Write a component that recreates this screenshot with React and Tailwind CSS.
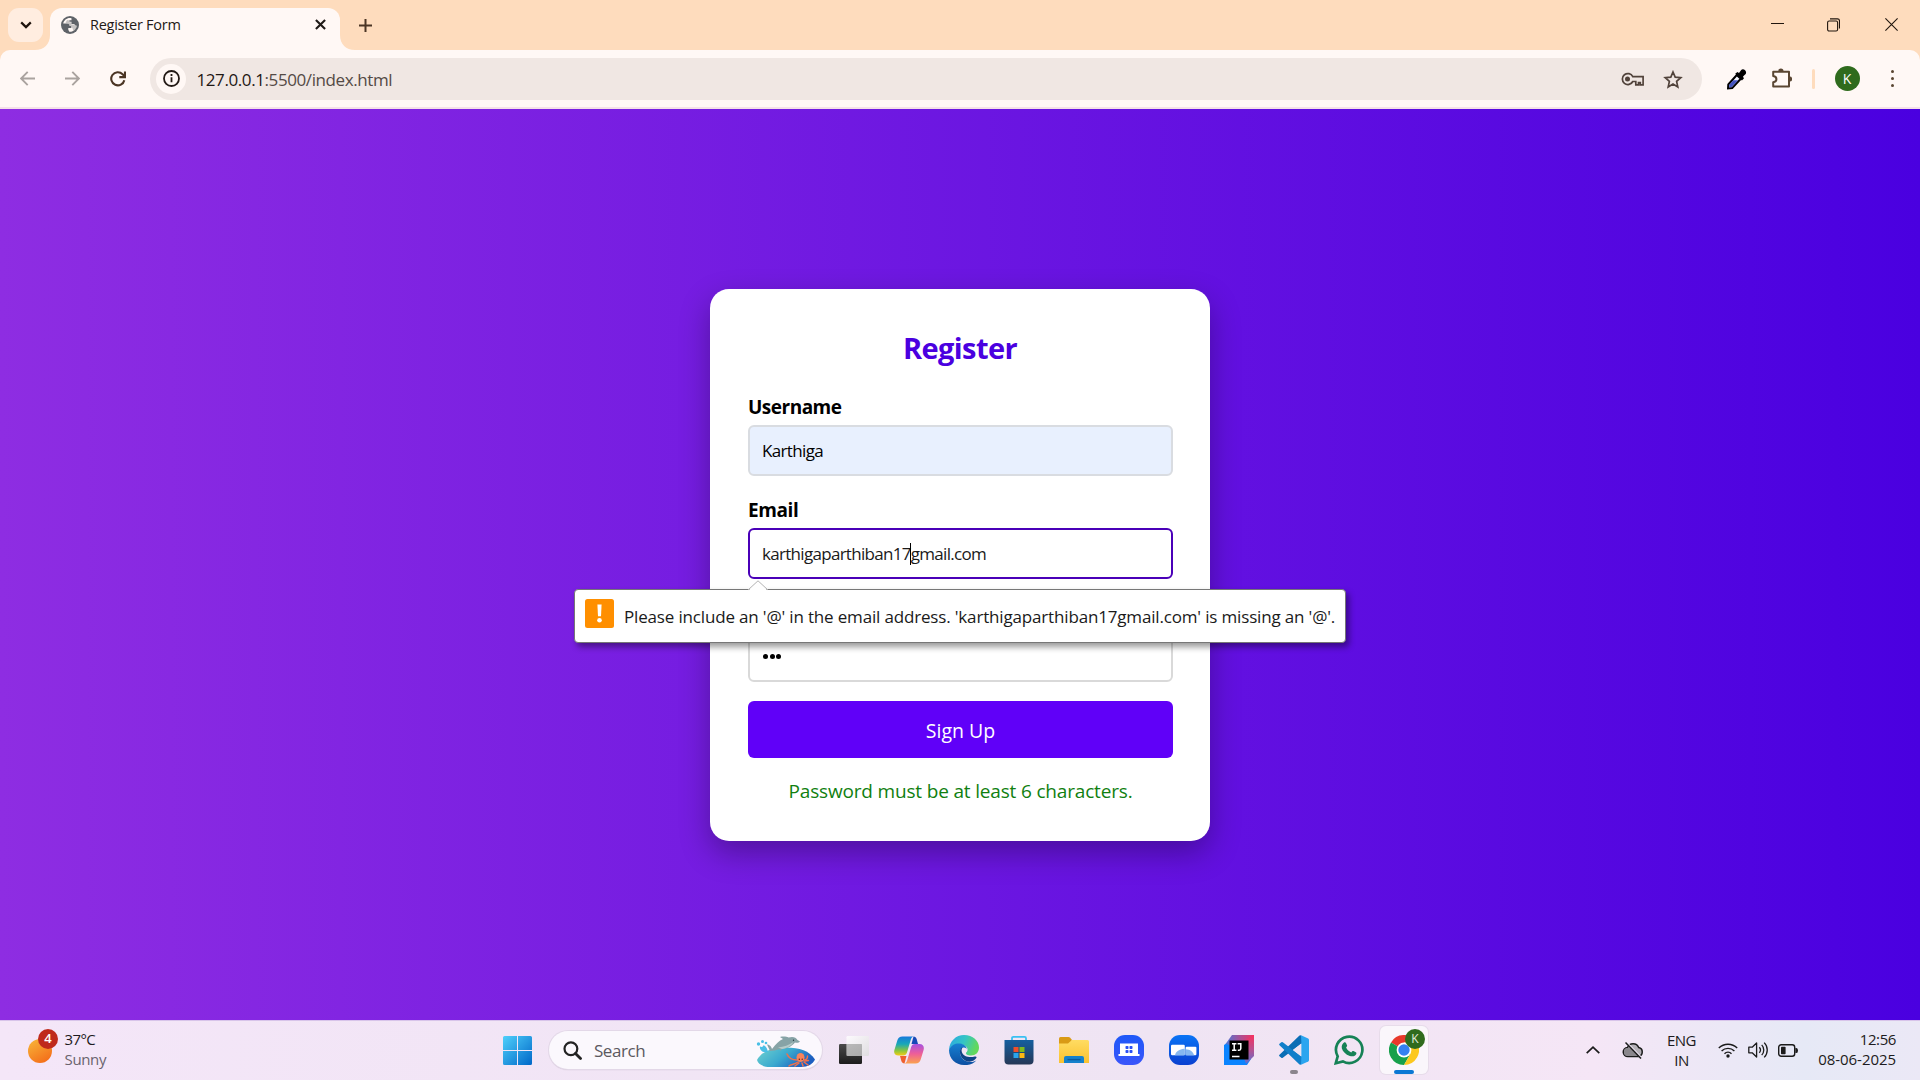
import React from "react";

/* ---------- Browser chrome ---------- */

function TabStrip() {
  return (
    <div className="flex h-[50px] items-stretch bg-[#fedcbd]">
      <button className="mt-2 ml-2 flex h-[34px] w-[35px] items-center justify-center rounded-[11px] bg-[#ffede0]">
        <svg className="h-[8px] w-[12px]" viewBox="0 0 12 8" fill="none" stroke="#1f140d" strokeWidth="2.2">
          <path d="M1.2 1.4 6 6.1l4.8-4.7" />
        </svg>
      </button>
      <svg className="-ml-[8px] mt-auto h-[15px] w-[15px]" viewBox="0 0 15 15">
        <path d="M15 0v15H0C9 15 15 9 15 0z" fill="#fff8f5" />
      </svg>
      <div className="mt-[7.5px] flex max-w-[290px] flex-1 items-center rounded-t-[12px] bg-[#fff8f5] pr-[14px] pb-[8px] pl-[11px]">
        <svg className="h-[18px] w-[18px]" viewBox="0 0 18 18">
          <circle cx="9" cy="9" r="9" fill="#5f6368" />
          <path
            d="M10.500 2.200C6.500 1.200 3 3.800 2.200 7.500h3.600c1.600 0 2.600.9 2.600 2.300h1.700v2.100H7.300v1.800l1 2.100c4 .3 7.200-2.500 7.500-6l-1.500-.3-1.100-1.500h-2.700V5.800H8.400V4.200h2.100z"
            fill="#fff8f5"
          />
          <path d="M8.400 4.600v1.700h2v2.200h2.900l1 1.400h1.600l-.9 3-2.600 2.200-1.100-3.300H9.900V9.300H7.700L6.500 7.600 4.500 6.800l1.600-2.900z" fill="#5f6368" opacity=".35" />
        </svg>
        <span className="mt-px ml-[11px] text-[14.5px] leading-5 tracking-[-0.27px] text-[#231a15]">Register Form</span>
        <svg className="ml-auto h-[11px] w-[11px]" viewBox="0 0 11 11" stroke="#1f1a17" strokeWidth="2.1">
          <path d="M.9.9l9.200 9.200M10.100.9.9 10.100" />
        </svg>
      </div>
      <svg className="mt-auto h-[15px] w-[15px]" viewBox="0 0 15 15">
        <path d="M0 0v15h15C6 15 0 9 0 0z" fill="#fff8f5" />
      </svg>
      <svg className="mt-[18.500px] ml-[4px] h-[13px] w-[13px]" viewBox="0 0 13 13" stroke="#4b3524" strokeWidth="2">
        <path d="M6.500 0v13M0 6.500h13" />
      </svg>
      <div className="mt-[17px] mr-[22px] ml-auto flex h-[15px] items-center gap-[43px] text-[#21160e]">
        <svg className="h-[15px] w-[13px]" viewBox="0 0 13 15" stroke="currentColor" strokeWidth="1">
          <path d="M0 6.500h13" />
        </svg>
        <svg className="h-[14px] w-[13px]" viewBox="0 0 13 14" fill="none" stroke="currentColor" strokeWidth="1.100">
          <rect x=".6" y="3" width="10" height="10" rx="1.500" />
          <path d="M3 .9h7.500a2 2 0 0 1 2 2v7.600" />
        </svg>
        <svg className="ml-[2px] h-[13px] w-[13px]" viewBox="0 0 13 13" stroke="currentColor" strokeWidth="1.100">
          <path d="M.4.4l12.200 12.200M12.600.4.4 12.600" />
        </svg>
      </div>
    </div>
  );
}

function Toolbar() {
  return (
    <div className="bg-[#fedcbd]">
      <div className="flex h-[57px] items-center rounded-t-[10px] bg-[#fff8f5] pl-5">
        <svg className="h-[15px] w-[15px]" viewBox="0 0 15 15" fill="none" stroke="#aaa39f" strokeWidth="1.900">
          <path d="M15 7.500H1.500M7.700.9 1.100 7.500l6.600 6.600" />
        </svg>
        <svg className="ml-[30px] h-[15px] w-[15px]" viewBox="0 0 15 15" fill="none" stroke="#aaa39f" strokeWidth="1.900">
          <path d="M0 7.500h13.500M7.300.9l6.600 6.600-6.600 6.600" />
        </svg>
        <svg className="ml-[29.500px] h-[16px] w-[16px]" viewBox="0 0 16 16" fill="none" stroke="#4b3524" strokeWidth="2.100">
          <path d="M14.300 9.200A6.600 6.600 0 1 1 12.600 3.200L14.600 5.200" />
          <path d="M15 .4v5.700H9.300" />
        </svg>
        <div className="ml-[24.500px] flex h-[42px] w-[1552px] items-center rounded-full bg-[#f0e7e3] pl-[6px]">
          <div className="flex h-[30px] w-[30px] items-center justify-center rounded-full bg-[#fff8f5]">
            <svg className="h-[17px] w-[17px]" viewBox="0 0 17 17" fill="none" stroke="#231a15" strokeWidth="1.800">
              <circle cx="8.500" cy="8.500" r="7.500" />
              <path d="M8.500 7.300v5M8.500 4.100v1.900" />
            </svg>
          </div>
          <span className="mt-[2px] ml-[10.500px] text-[17px] leading-6 tracking-[-0.41px] text-[#544a45]">
            <span className="text-[#1f1814]">127.0.0.1</span>:5500/index.html
          </span>
          <svg className="mt-px ml-auto h-[14px] w-[23px]" viewBox="0 0 23 14" fill="none" stroke="#51433b" strokeWidth="1.700">
            <path d="M11.800 4.600A5.500 5.500 0 1 0 11.800 9.500H14.800V12.800H17.500V10.600H19.300V12.800H22.100V4.600z" />
            <circle cx="6.500" cy="7" r="2.500" fill="#51433b" stroke="none" />
          </svg>
          <svg className="mt-px mr-[19.500px] ml-[18.500px] h-[19px] w-[20px]" viewBox="0 0 20 19" fill="none" stroke="#51433b" strokeWidth="1.700">
            <path d="m10 2 2.200 5.200 5.600.5-4.200 3.700 1.200 5.500-4.800-2.900-4.800 2.900 1.200-5.500L2.200 7.700l5.600-.5z" />
          </svg>
        </div>
        <svg className="mt-px ml-[25px] h-[22px] w-[20px]" viewBox="0 0 20 22">
          <path d="m1 20.500.3-4L9.800 7l4 3.800-8.600 9.300z" fill="#f4f5ff" stroke="#000" strokeWidth="2" />
          <path d="m2.100 19.600.2-2.900 4-4.500h4.900l-6.500 6.900z" fill="#4354c0" />
          <path d="M8.200 5.800 10.400 4l1.600 1L14.200 2c2-2.200 6.200.900 4.500 3.900L16 8.500l.9 1.900-2 2.100z" fill="#000" />
        </svg>
        <svg className="ml-[24px] h-[21px] w-[21px]" viewBox="0 0 21 21">
          <path d="M2.200 3.700H18v14.800H2.200v-4.300c4.300-.6 4.300-5.400 0-6.100z" fill="none" stroke="#5a4632" strokeWidth="2" strokeLinejoin="round" />
          <path d="M7.300 3a2.600 2.600 0 0 1 5.200 0zM18.700 8.600a2.500 2.500 0 0 1 0 5z" fill="#5a4632" />
        </svg>
        <div className="ml-[20px] h-5 w-[2.500px] rounded-full bg-[#fedcbd]" />
        <div className="ml-[20px] flex h-[25px] w-[25px] items-center justify-center rounded-full bg-[#2f6b1d] text-[14px] text-white">K</div>
        <div className="ml-[31px] flex flex-col gap-[3.500px]">
          <i className="h-[3.500px] w-[3.500px] rounded-full bg-[#5a4632]" />
          <i className="h-[3.500px] w-[3.500px] rounded-full bg-[#5a4632]" />
          <i className="h-[3.500px] w-[3.500px] rounded-full bg-[#5a4632]" />
        </div>
      </div>
      <div className="h-[2px] bg-[#f4e0e8]" />
    </div>
  );
}

/* ---------- Registration page ---------- */

const LABEL = "block h-[27px] pt-px text-[19px] leading-[27px] font-bold text-black";
const FIELD = "mt-[5px] flex h-[51px] items-center rounded-[6px] border-2 px-[12px] text-[17px] leading-6";

function ValidationBubble() {
  return (
    <div className="absolute top-[61px] left-[-174px] z-10 flex h-[54px] w-[772px] items-center rounded-[4px] border border-[#777] bg-white pl-[10px] shadow-[3px_4px_6px_rgba(0,0,0,0.4)]">
      <svg className="absolute -top-[10px] left-[172px] h-[11px] w-[22px]" viewBox="0 0 22 11">
        <path d="M1 11 11 .8 21 11z" fill="#fff" />
        <path d="M1 10 11 .8 21 10" fill="none" stroke="#b3b3b3" />
      </svg>
      <svg className="-mt-[4px] h-[29px] w-[29px]" viewBox="0 0 29 29">
        <rect width="29" height="29" rx="2.500" fill="#ff8f00" />
        <path d="M12.400 5.500h4.200L16 17.300h-3z" fill="#fff" />
        <circle cx="14.500" cy="21.300" r="2.300" fill="#fff" />
      </svg>
      <span className="mt-[2px] ml-[10px] text-[17px] leading-6 tracking-[-0.165px] whitespace-nowrap text-[#1a1a1a]">
        Please include an '@' in the email address. 'karthigaparthiban17gmail.com' is missing an '@'.
      </span>
    </div>
  );
}

function RegisterPage() {
  return (
    <main className="flex h-[911px] items-center justify-center bg-[linear-gradient(to_right,#8e2de2,#4a00e0)]">
      <section className="h-[552px] w-[500px] rounded-[19px] bg-white px-[38px] pt-[38px] shadow-[0_12px_31px_rgba(0,0,0,0.3)]">
        <h2 className="h-[41px] text-center text-[29px] leading-[42px] font-bold tracking-[-0.6px] text-[#4a00e0]">Register</h2>
        <div className="mt-[25px] w-[425px]">
          <label className={`${LABEL} tracking-[-0.5px]`}>Username</label>
          <div className={`${FIELD} border-[#d9dce1] bg-[#e8f0fe] pt-[2px] tracking-[-0.65px]`}>Karthiga</div>
          <label className={`${LABEL} mt-5 tracking-[-0.4px]`}>Email</label>
          <div className="relative">
            <div className={`${FIELD} border-[#4a00b8] bg-white pt-[2px] tracking-[-0.7px] text-[#1a1a1a]`}>
              karthigaparthiban17
              <i className="mr-[-0.5px] -ml-[0.500px] h-[22px] w-px bg-black" />
              gmail.com
            </div>
            <ValidationBubble />
          </div>
          <div className={`${FIELD} mt-[52px] gap-[1.500px] border-[#d9d9d9] bg-white`}>
            <i className="ml-[1px] h-[5px] w-[5px] rounded-full bg-black" />
            <i className="h-[5px] w-[5px] rounded-full bg-black" />
            <i className="h-[5px] w-[5px] rounded-full bg-black" />
          </div>
          <button className="mt-[19px] block h-[57px] w-full rounded-[6px] bg-[#6000f8] pt-[3px] text-[19.500px] text-white">Sign Up</button>
          <p className="mt-[20px] text-center text-[19px] leading-[27px] tracking-[-0.17px] text-[#108010]">
            Password must be at least 6 characters.
          </p>
        </div>
      </section>
    </main>
  );
}

/* ---------- Taskbar ---------- */

const ICON = "h-[30px] w-[30px] shrink-0";

function Defs() {
  return (
    <svg className="absolute h-0 w-0">
      <defs>
        <linearGradient id="win" x1="0" y1="0" x2="1" y2="1"><stop offset="0" stopColor="#4fd0fb" /><stop offset="1" stopColor="#0067c8" /></linearGradient>
        <linearGradient id="sun" x1="0" y1="0" x2=".6" y2="1"><stop offset="0" stopColor="#f8b83a" /><stop offset="1" stopColor="#f4711b" /></linearGradient>
        <linearGradient id="sea" x1="0" y1="0" x2="1" y2=".4"><stop offset="0" stopColor="#6fd3cf" /><stop offset=".55" stopColor="#3aa9cf" /><stop offset="1" stopColor="#1c5fc0" /></linearGradient>
        <linearGradient id="dark" x1="0" y1="0" x2="0" y2="1"><stop offset="0" stopColor="#4a4a4a" /><stop offset="1" stopColor="#1c1c1c" /></linearGradient>
        <linearGradient id="glass" x1="0" y1="0" x2="1" y2="1"><stop offset="0" stopColor="#fff" /><stop offset="1" stopColor="#dcdcdc" /></linearGradient>
        <linearGradient id="cpA" x1="0" y1="0" x2="0" y2="1"><stop offset="0" stopColor="#1779dc" /><stop offset=".4" stopColor="#18a8b8" /><stop offset=".75" stopColor="#8cc63c" /><stop offset="1" stopColor="#f5cb14" /></linearGradient>
        <linearGradient id="cpB" x1="0" y1="0" x2="0" y2="1"><stop offset="0" stopColor="#a652e0" /><stop offset=".5" stopColor="#ee5e98" /><stop offset="1" stopColor="#fba24e" /></linearGradient>
        <linearGradient id="edA" x1="0" y1="0" x2="1" y2=".3"><stop offset="0" stopColor="#2aa6e6" /><stop offset=".55" stopColor="#35c5c4" /><stop offset="1" stopColor="#62d85c" /></linearGradient>
        <linearGradient id="edB" x1="0" y1="0" x2="0" y2="1"><stop offset="0" stopColor="#1780d2" /><stop offset="1" stopColor="#0c4fa2" /></linearGradient>
        <linearGradient id="store" x1="0" y1="0" x2="0" y2="1"><stop offset="0" stopColor="#155f9f" /><stop offset="1" stopColor="#263857" /></linearGradient>
        <linearGradient id="fold" x1="0" y1="0" x2="0" y2="1"><stop offset="0" stopColor="#ffdc62" /><stop offset="1" stopColor="#fac12f" /></linearGradient>
        <linearGradient id="ijA" x1="0" y1="0" x2="1" y2="0"><stop offset="0" stopColor="#4a78d8" /><stop offset=".45" stopColor="#a0549c" /><stop offset="1" stopColor="#f7305e" /></linearGradient>
        <linearGradient id="ijB" x1="0" y1="0" x2="0" y2="1"><stop offset="0" stopColor="#f7305e" /><stop offset=".5" stopColor="#b8508f" /><stop offset="1" stopColor="#5b6fd0" /></linearGradient>
        <linearGradient id="blu" x1="0" y1="0" x2="0" y2="1"><stop offset="0" stopColor="#0a74f5" /><stop offset="1" stopColor="#0a40d0" /></linearGradient>
        <linearGradient id="dex" x1="0" y1="0" x2="0" y2="1"><stop offset="0" stopColor="#1e58f8" /><stop offset="1" stopColor="#3a55fa" /></linearGradient>
      </defs>
    </svg>
  );
}

function SearchBox() {
  return (
    <div className="ml-[17px] flex h-[38px] w-[273px] items-center rounded-full bg-[#fbf8fd] pr-[7px] pl-[14px] shadow-[0_0_0_1px_#e3d8e8,0_1px_1px_#b9afbd]">
      <svg className="h-[19px] w-[19px]" viewBox="0 0 19 19" fill="none" stroke="#232323" strokeWidth="2.200">
        <circle cx="7.900" cy="7.700" r="6.400" />
        <path d="m12.500 12.500 5 5" strokeWidth="2.800" strokeLinecap="round" />
      </svg>
      <span className="mt-px ml-[12px] text-[17px] leading-6 tracking-[-0.45px] text-[#5c5960]">Search</span>
      <svg className="mt-[2px] ml-auto h-[31px] w-[59px]" viewBox="0 0 59 31">
        <path d="M1 24C5 17 13 12 27 11.500 42 11 53 14 59 23.500 57 28 52 31 45 31H14C7 31 2 28 1 24z" fill="url(#sea)" />
        <g fill="#49bfe6">
          <path d="M12 16C7 17.500 3 14 4 10.500c2 .8 3 .3 3.500-1.200 2 .7 3.500 2.200 4.500 6.700z" />
          <circle cx="2.500" cy="8" r="1.700" /><circle cx="6.500" cy="5.500" r="1.500" /><circle cx="10" cy="7" r="1.300" />
        </g>
        <path d="M11 8.500c3 0 4.500 2.500 5 4.500C20 8 23 4.500 27 3l-3-2c3-.700 6.500-.5 8.500.5 4-1.300 7.500-.5 9 2.500l2.500 1.500c-1 1.200-3 1.500-5 1-3.500 4.500-9 6-13 6.500l-1.500 2-1-1.700c-3 .8-6 1.700-9.500 1.700z" fill="#87a3a6" />
        <path d="M22 11.500c6-.5 11-2.500 15.500-5.500-2 4-7 6.500-11.500 7z" fill="#b7cbc9" />
        <circle cx="37.500" cy="4.300" r=".7" fill="#23373c" />
        <g fill="none" stroke="#f0714c" strokeWidth="1.500" strokeLinecap="round">
          <path d="M41 24c-4 0-8-1-10-6M42 26c-4 3-7 2-9 4M43 27l-4 3M46 27l1 3M48 26l4 3M48 24c2 0 3.500-1.500 3.500-4M49 25l3.500-.5" />
        </g>
        <ellipse cx="44.500" cy="21.500" rx="4" ry="4.600" fill="#f6845c" />
        <circle cx="43.300" cy="23.300" r=".7" fill="#5a1d17" /><circle cx="46.200" cy="23.300" r=".7" fill="#5a1d17" />
      </svg>
    </div>
  );
}

function AppIcons() {
  return (
    <div className="ml-[17px] flex items-center gap-[25px]">
      {/* Task view */}
      <svg className={ICON} viewBox="0 0 30 30">
        <rect x="0" y="9" width="23" height="20" rx="1.200" fill="url(#dark)" />
        <rect x="7.500" y="1" width="22.500" height="20" rx="1.200" fill="url(#glass)" fillOpacity=".8" />
        <path d="M7.500 9H23v12H7.500z" fill="#8f8f8f" fillOpacity=".4" />
      </svg>
      {/* Copilot */}
      <svg className={ICON} viewBox="0 0 30 30">
        <path d="M19.500 1.500c1.700 0 2.600 1 3.200 2.800L24 9h-6.500z" fill="#1648b8" />
        <path d="M8.500 1.500h11c-1.600.4-2.300 1.700-2.800 3.400L13 17.500c-.700 2-1.800 3-4 3H4.500C1 20.500-.5 18.500.400 15L3.300 5.500c.800-2.500 2.400-4 5.200-4z" fill="url(#cpA)" />
        <path d="M10.500 28.500c-1.700 0-2.600-1-3.200-2.800L6 21h6.500z" fill="#ef5f2e" />
        <path d="M21.500 28.500h-11c1.600-.4 2.300-1.700 2.800-3.400L17 12.500c.7-2.400 1.800-3.500 4-3.500h4.500c3.500 0 5 2.500 4.100 6l-2.900 9.500c-.8 2.500-2.400 4-5.200 4z" fill="url(#cpB)" />
      </svg>
      {/* Edge */}
      <svg className={ICON} viewBox="0 0 30 30">
        <path d="M0 15C.5 6 7 0 15 0c9 0 15 6 15 12.500 0 5-3.500 8-8 8-3.500 0-5.500-1.300-5-2.800 2.500-2 1.800-5-.500-6.700C12 7.500 4 8 0 15z" fill="url(#edA)" />
        <path d="M0 15C2 9.500 7 8 11 8.500c4 .5 6.500 3 6.800 5.300-4-3-7.300 0-6.800 4.200.5 5 5 9 10.500 9 2.500 0 4.500-.700 6-1.800C25 28.500 20 30.500 15 30 6.500 30 0 23.500 0 15z" fill="url(#edB)" />
        <path d="M11 18c-.5-3.500 1-5.600 3-5.800-1.500 1.300-1.800 3.300-1 5.300 1.500 4 7.500 5.500 12.800 4 1.500-.4 2.200.5 1.500 1.500-1.200 1.800-3.500 3.500-6.800 3.700C15.500 26.500 11.500 22.500 11 18z" fill="#0f4386" />
      </svg>
      {/* Store */}
      <svg className={ICON} viewBox="0 0 30 30">
        <path d="M8 6V3.200Q8 1.800 9.400 1.800h11.200Q22 1.800 22 3.200V6" fill="none" stroke="#3ac0f2" strokeWidth="1.800" />
        <path d="M.500 5h29v20.500q0 4-4 4h-21q-4 0-4-4z" fill="url(#store)" />
        <path d="M9.500 12h5v5h-5z" fill="#ef4f29" /><path d="M15.500 12h5v5h-5z" fill="#7fba1e" />
        <path d="M9.500 18h5v5h-5z" fill="#2aa4ec" /><path d="M15.500 18h5v5h-5z" fill="#fdb913" />
      </svg>
      {/* File Explorer */}
      <svg className={ICON} viewBox="0 0 30 30">
        <path d="M0 3.500Q0 2 1.500 2h8q1 0 1.700.8L13 5l-2.500 4H0z" fill="#d99a16" />
        <path d="M0 8.500h9L13 5h15.500Q30 5 30 6.500V28H0z" fill="url(#fold)" />
        <path d="M5 28v-5q0-2 2-2h16q2 0 2 2v5z" fill="#1581cc" />
        <path d="M8.500 24.600h13" stroke="#0b5a9e" strokeWidth="1.400" />
      </svg>
      {/* Screen sharing */}
      <svg className={ICON} viewBox="0 0 30 30">
        <rect width="30" height="30" rx="11" fill="url(#dex)" />
        <path d="M6 8.500h18V19h1.500v2h-21v-2H6z" fill="#fff" />
        <g fill="#2a50f5"><rect x="11.500" y="11" width="3" height="3" rx=".8" /><rect x="15.500" y="11" width="3" height="3" rx=".8" /><rect x="11.500" y="15" width="3" height="3" rx=".8" /><rect x="15.500" y="15" width="3" height="3" rx=".8" /></g>
      </svg>
      <svg className={ICON} viewBox="0 0 30 30">
        <rect width="30" height="30" rx="11" fill="url(#blu)" />
        <rect x="2" y="9.700" width="13.800" height="10.500" rx="1.200" fill="#fff" />
        <rect x="16.600" y="11.800" width="10.800" height="8.400" rx="1" fill="#fff" />
        <path d="M6 20.200c1-4 4.500-6 9-6.500l.8.500v6zM16.600 20.200v-6c4.500.3 7.900 2.500 8.400 6z" fill="#86b8f0" />
      </svg>
      {/* IntelliJ IDEA */}
      <svg className={ICON} viewBox="0 0 30 30">
        <path d="M0 10 9 4l18 20-4 6H0z" fill="#0a84ff" />
        <path d="M8 0h22v8L6 10 1.500 9z" fill="url(#ijA)" />
        <path d="M30 0v21l-8 8-2-6V6z" fill="url(#ijB)" />
        <rect x="5.500" y="5.500" width="19" height="19" fill="#000" />
        <path d="M8 8.800h4.400M10.200 8.800v6.400M8 15.200h4.400M13.600 8.800h3.200v4.700q0 1.700-1.700 1.700h-1.300M8 21.600h7.500" fill="none" stroke="#fff" strokeWidth="1.500" />
      </svg>
      {/* VS Code */}
      <div className="relative">
        <svg className={ICON} viewBox="0 0 30 30">
          <path d="M22 .2 29.200 3.500Q30 4 30 5v20q0 1-.8 1.500L22 29.800z" fill="#2ba5ef" />
          <path d="m22 .2.400 8.200L3.800 22.800q-.8.600-1.500 0L.5 21.200q-.8-.8 0-1.500L20.500.6z" fill="#0a6db5" />
          <path d="m22 29.800.4-8.200L3.800 7.200q-.8-.6-1.500 0L.5 8.800q-.8.8 0 1.500l20 19.100z" fill="#117fca" />
          <path d="M22.400 8.400v13.200L14 15z" fill="#eee3f2" />
        </svg>
        <i className="absolute top-[35px] left-[11px] h-1 w-2 rounded-full bg-[#8b858d]" />
      </div>
      {/* WhatsApp */}
      <svg className={ICON} viewBox="0 0 30 30" fill="none" stroke="#168256">
        <path d="M1.800 28.200 3.700 21.300A13.200 13.200 0 1 1 8.900 26.400z" strokeWidth="2.700" />
        <path d="M10 7.600c.7-.6 1.600-.4 2 .4l1 2.300c.3.600 0 1.200-.9 2.300 1.200 2.400 2.800 3.900 5.200 4.800 1.100-1.500 1.500-1.700 2.200-1.300l2.300 1.100c.7.4.700 1 .5 1.700-1 2.400-3.700 3-6.500 2-4.200-1.400-7-4.300-8-7.700-.5-2.400.8-4.600 2.200-5.600z" fill="#168256" stroke="none" />
      </svg>
    </div>
  );
}

function ChromeTile() {
  return (
    <div className="relative ml-[16px] flex h-12 w-12 items-center justify-center rounded-[6px] bg-[#faf6fb] shadow-[0_0_0_1px_#e7dcea]">
      <svg className={ICON} viewBox="0 0 30 30">
        <path d="M15 15 2 7.500A15 15 0 0 1 28 7.500H15z" fill="#e8382b" />
        <path d="M15 15 2 7.500A15 15 0 0 0 15 30l6.500-11.200z" fill="#17a04b" />
        <path d="M15 7.500h13A15 15 0 0 1 15 30l6.500-11.300z" fill="#fcc81e" />
        <circle cx="15" cy="15" r="7.400" fill="#fff" />
        <circle cx="15" cy="15" r="5.700" fill="#3480f0" />
      </svg>
      <span className="absolute top-[3px] left-[25px] flex h-5 w-5 items-center justify-center rounded-full bg-[#2f6b1d] text-[12px] text-[#e3ecdf]">K</span>
      <i className="absolute top-[44px] left-[14px] h-1 w-5 rounded-full bg-[#0a78d4]" />
    </div>
  );
}

function SystemTray() {
  return (
    <div className="mr-[24px] ml-auto flex items-center text-[15px] leading-5 text-[#1d1b20]">
      <svg className="h-[8px] w-[14px]" viewBox="0 0 14 8" fill="none" stroke="#1b1b1b" strokeWidth="1.700">
        <path d="M.700 7.200 7 1.200l6.300 6" />
      </svg>
      <svg className="ml-[22px] h-[18px] w-[22px]" viewBox="0 0 22 18">
        <path d="M6 15.500a4.500 4.500 0 0 1-.5-9 6 6 0 0 1 11.200 0A4.600 4.600 0 0 1 16.500 15.500z" fill="#b4b0b6" stroke="#1b1b1b" strokeWidth="1.500" />
        <path d="M6 15a4 4 0 0 1 0-8q7 0 9.500 8z" fill="#8a878c" />
        <path d="m4.500 1.500 15 15.500" stroke="#f0e6f6" strokeWidth="2" />
        <path d="m3.500 1.500 15.500 16" stroke="#1b1b1b" strokeWidth="1.500" />
      </svg>
      <div className="ml-[23px] flex w-[29px] flex-col items-center tracking-[-0.500px]">
        <span>ENG</span>
        <span>IN</span>
      </div>
      <svg className="ml-[22px] h-[16px] w-[20px]" viewBox="0 0 20 16" fill="none" stroke="#1b1b1b" strokeWidth="1.400">
        <path d="M.8 6a13 13 0 0 1 18.400 0M3.600 9a9 9 0 0 1 12.800 0M6.500 11.700a5 5 0 0 1 7 0" />
        <circle cx="10" cy="14" r="1.700" fill="#1b1b1b" stroke="none" />
      </svg>
      <svg className="ml-[10px] h-[18px] w-[20px]" viewBox="0 0 20 18" fill="none" stroke="#1b1b1b" strokeWidth="1.300">
        <path d="M.8 6.200h3.400L8.600 2v14l-4.400-4.200H.8z" strokeLinejoin="round" />
        <path d="M11.300 6.300a4 4 0 0 1 0 5.400M13.700 3.900a7.300 7.300 0 0 1 0 10.200M16.200 1.600a10.500 10.500 0 0 1 0 14.800" />
      </svg>
      <svg className="ml-[10px] h-[13px] w-[20px]" viewBox="0 0 20 13">
        <rect x=".7" y=".7" width="16" height="11.600" rx="2.500" fill="none" stroke="#1b1b1b" strokeWidth="1.400" />
        <rect x="3" y="2.800" width="4.600" height="7.400" rx=".8" fill="#1b1b1b" />
        <path d="M17.400 4h1q1.600 0 1.600 2.500T18.400 9h-1z" fill="#1b1b1b" />
      </svg>
      <div className="mb-[2px] ml-[20px] flex w-[78px] flex-col items-end whitespace-nowrap">
        <span className="tracking-[-0.400px]">12:56</span>
        <span className="tracking-[-0.050px]">08-06-2025</span>
      </div>
    </div>
  );
}

function Taskbar() {
  return (
    <footer className="flex h-[60px] items-center border-t border-[#d8c4ea] bg-[linear-gradient(to_right,#f4e6f8,#efe4f3_60%,#f5e6f6_83%,#e6e9f6_94%,#ebe8f6)] pb-px">
      <Defs />
      <div className="flex w-[503px] items-center pl-[28px]">
        <div className="relative h-6 w-6">
          <svg className="mt-[1px] h-6 w-6" viewBox="0 0 24 24"><circle cx="12" cy="12" r="12" fill="url(#sun)" /></svg>
          <span className="absolute -top-[9px] left-[10px] flex h-5 w-5 items-center justify-center rounded-full bg-[#bf2a1c] text-[13px] font-semibold text-white">4</span>
        </div>
        <div className="mb-[2px] ml-[12.500px] flex flex-col text-[15px] leading-5">
          <span className="tracking-[-0.600px] text-[#1d1b20]">37°C</span>
          <span className="tracking-[-0.350px] text-[#6a636d]">Sunny</span>
        </div>
      </div>
      <svg className="h-[29px] w-[29px]" viewBox="0 0 29 29">
        <path d="M1.500 0H14v14H0V1.500Q0 0 1.500 0zM15 0h12.500Q29 0 29 1.500V14H15zM0 15h14v14H1.500Q0 29 0 27.500zM15 15h14v12.500q0 1.500-1.500 1.500H15z" fill="url(#win)" />
      </svg>
      <SearchBox />
      <AppIcons />
      <ChromeTile />
      <SystemTray />
    </footer>
  );
}

export default function App() {
  return (
    <div className="flex h-[1080px] w-[1920px] flex-col overflow-hidden font-['Open_Sans','Noto_Sans',sans-serif]">
      <TabStrip />
      <Toolbar />
      <RegisterPage />
      <Taskbar />
    </div>
  );
}
